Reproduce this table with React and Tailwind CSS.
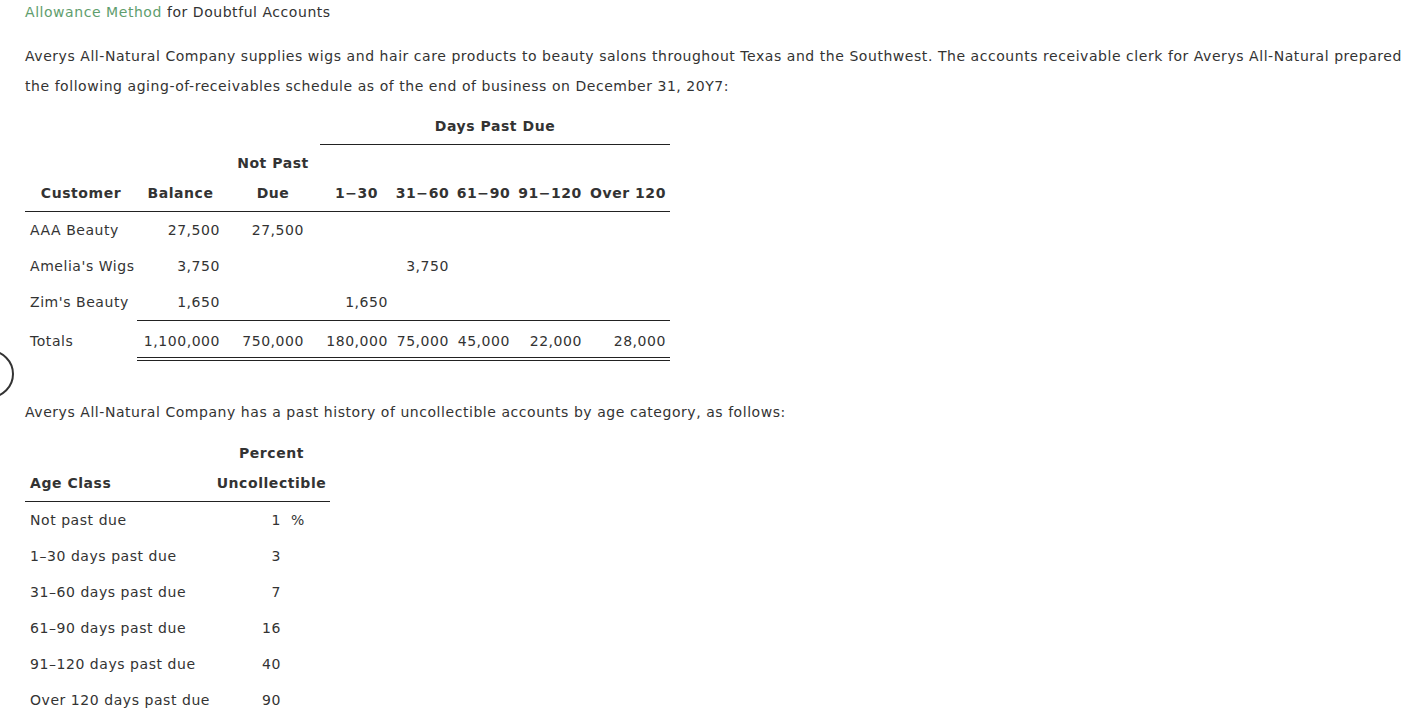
import React from 'react'

// --- Aging schedule data ---
const ROWS = [
  { name: 'AAA Beauty', vals: ['27,500', '27,500', '', '', '', '', ''] },
  { name: "Amelia's Wigs", vals: ['3,750', '', '', '3,750', '', '', ''] },
  { name: "Zim's Beauty", vals: ['1,650', '', '1,650', '', '', '', ''] },
]
const TOTALS = ['1,100,000', '750,000', '180,000', '75,000', '45,000', '22,000', '28,000']

// right padding per numeric column (Balance .. Over 120)
const PADS = ['pr-[10px]', 'pr-[12px]', 'pr-[4px]', 'pr-[4px]', 'pr-[4px]', 'pr-[4px]', 'pr-[4px]']

const AGES = [
  ['Not past due', '1', true],
  ['1–30 days past due', '3'],
  ['31–60 days past due', '7'],
  ['61–90 days past due', '16'],
  ['91–120 days past due', '40'],
  ['Over 120 days past due', '90'],
]

const GRID = 'grid w-[645px] grid-cols-[112px_93px_86px_76px_61px_61px_72px_84px]'

function AgingTable() {
  return (
    <div className="mt-[10px]">
      <div className={GRID + ' h-[34px]'}>
        <div className="col-span-3" />
        <div className="col-span-5 ml-[4px] border-b border-[#222] text-center font-bold leading-[30px]">Days Past Due</div>
      </div>
      <div className={GRID + ' h-[33px] pt-[3px] font-bold leading-[30px]'}>
        <div className="col-span-2" />
        <div className="text-center">Not Past</div>
      </div>
      <div className={GRID + ' h-[34px] border-b border-[#222] font-bold leading-[30px] text-center whitespace-nowrap'}>
        <div>Customer</div>
        <div className="pr-[6px]">Balance</div>
        <div>Due</div>
        <div className="pl-[5px]">1−30</div>
        <div>31−60</div>
        <div>61−90</div>
        <div>91−120</div>
        <div>Over 120</div>
      </div>
      {ROWS.map(r => (
        <div key={r.name} className={GRID + ' h-[36px] leading-[36px]'}>
          <div className="pl-[5px] whitespace-nowrap">{r.name}</div>
          {r.vals.map((v, i) => (
            <div key={i} className={'text-right ' + PADS[i]}>{v}</div>
          ))}
        </div>
      ))}
      <div className={GRID + ' h-[41px]'}>
        <div className="pl-[5px] pt-[5px] leading-[32px]">Totals</div>
        {TOTALS.map((v, i) => (
          <div key={i} className={'border-t border-b-4 border-double border-[#222] pt-[4px] text-right leading-[32px] whitespace-nowrap ' + PADS[i]}>{v}</div>
        ))}
      </div>
    </div>
  )
}

function PercentTable() {
  return (
    <div className="mt-[11px] w-[305px]">
      <div className="grid h-[30px] grid-cols-[188px_117px] font-bold leading-[30px]">
        <div />
        <div className="text-center">Percent</div>
      </div>
      <div className="grid h-[34px] grid-cols-[188px_117px] border-b border-[#222] font-bold leading-[30px]">
        <div className="pl-[5px]">Age Class</div>
        <div className="text-center">Uncollectible</div>
      </div>
      {AGES.map(([label, pct, sign]) => (
        <div key={label} className="grid h-[36px] grid-cols-[188px_117px] leading-[36px]">
          <div className="pl-[5px] whitespace-nowrap">{label}</div>
          <div className="flex">
            <span className="w-[68px] text-right">{pct}</span>
            {sign && <span className="ml-[10px]">%</span>}
          </div>
        </div>
      ))}
    </div>
  )
}

export default function App() {
  return (
    <div className="relative min-h-screen overflow-hidden bg-white pl-[25px] font-['DejaVu_Sans',Verdana,sans-serif] text-[14px] tracking-[0.55px] text-[#333]">
      <div className="leading-[24px]">
        <span className="text-[#5f9e6e]">Allowance Method</span> for Doubtful Accounts
      </div>

      <p className="mt-[17px] leading-[30px] whitespace-nowrap">
        Averys All-Natural Company supplies wigs and hair care products to beauty salons throughout Texas and the Southwest. The accounts receivable clerk for Averys All-Natural prepared
        <br />
        the following aging-of-receivables schedule as of the end of business on December 31, 20Y7:
      </p>

      <AgingTable />

      <p className="mt-[36px] leading-[30px]">
        Averys All-Natural Company has a past history of uncollectible accounts by age category, as follows:
      </p>

      <PercentTable />

      {/* cut-off round control on the left edge */}
      <div className="absolute left-[-34px] top-[350px] h-[48px] w-[48px] rounded-full border-2 border-[#333]" />
    </div>
  )
}
